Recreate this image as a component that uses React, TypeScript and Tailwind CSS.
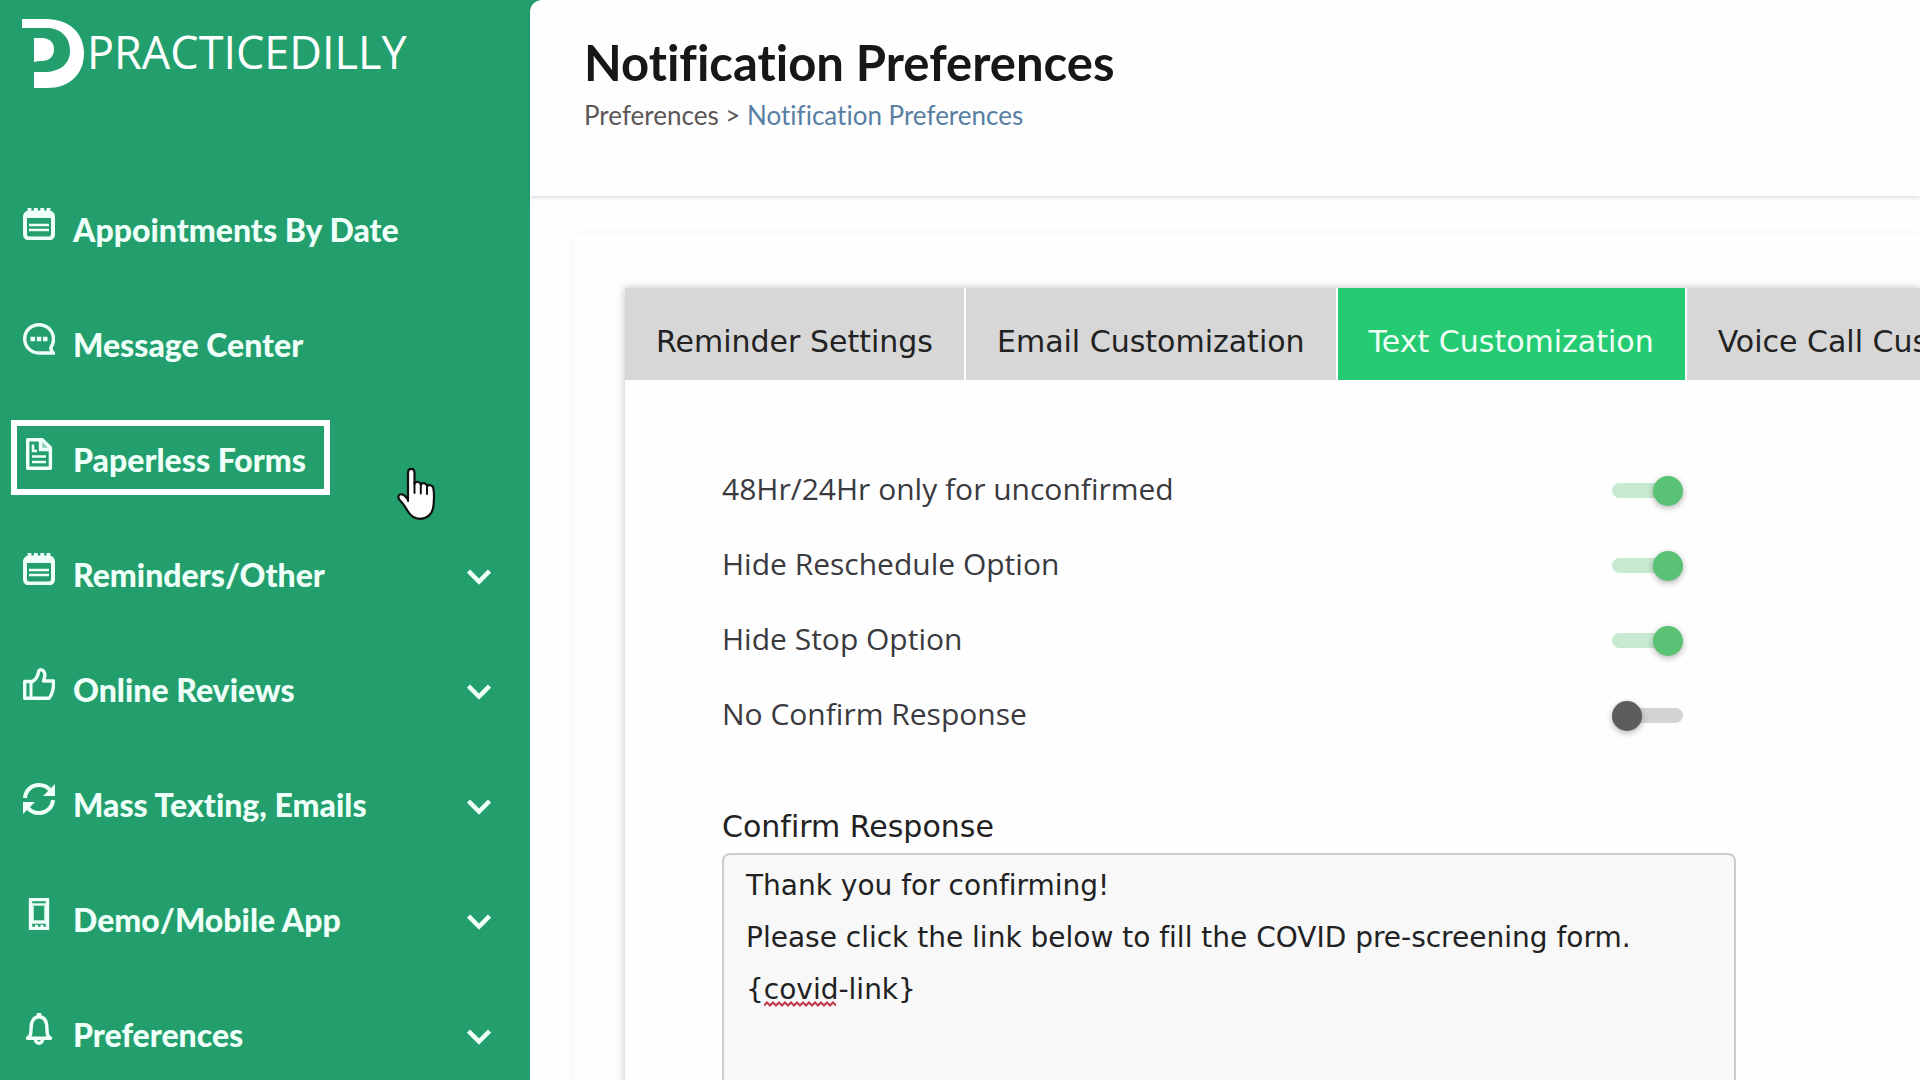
import React, { useState } from 'react';

interface NavItem {
  label: string;
  icon: React.ReactNode;
  expandable?: boolean;
  active?: boolean;
}

const Svg: React.FC<{ children: React.ReactNode }> = ({ children }) => (
  <svg
    viewBox="0 0 32 32"
    className="size-8 shrink-0 mb-2"
    fill="none"
    stroke="currentColor"
    strokeWidth={3.4}
    aria-hidden="true"
  >
    {children}
  </svg>
);

const NotepadIcon = () => (
  <Svg>
    <rect x="2" y="4.5" width="28" height="26" rx="4" strokeWidth={4} />
    <path d="M2 8h28" strokeWidth={4} />
    <path d="M6.500 0v6M12.800 0v6M19.200 0v6M25.500 0v6" strokeWidth={3.8} />
    <path d="M6 17h20M6 22h20" strokeWidth={2.4} />
  </Svg>
);

const ChatIcon = () => (
  <Svg>
    <path d="M16 1.700C8 1.700 1.700 7.800 1.700 15.800S8 30 16 30h14.500c-1.600-1.200-2.500-3-2.600-5.200 1.700-2.500 2.600-5.600 2.600-9C30.500 7.800 24 1.700 16 1.700z" />
    <path d="M7.500 16h4.500M13.800 16h4.500M20 16h4.500" strokeWidth={4.500} />
  </Svg>
);

const DocumentIcon = () => (
  <Svg>
    <path d="M4.700 1.700h14.500l8.200 8v20.600H4.700z" strokeLinejoin="round" />
    <path d="M17.500 1v10.500H28" />
    <path d="M17.500 1 28 11.500H17.500z" fill="currentColor" stroke="none" opacity={0.5} />
    <path d="M10 6.500v7M9 13h5M9 18.500h14M9 24h14" strokeWidth={2.600} />
  </Svg>
);

const ThumbIcon = () => (
  <Svg>
    <path
      d="M1.700 13.500h7.800c4-2.500 5.500-6 6-9.500.3-1.700 1.500-2.500 3-2.200 3.500.8 4.300 5.200 2 11.200h10c.3 6-1 13-4.500 17.300H1.700z"
      strokeLinejoin="round"
    />
    <path d="M8 13.500v17" strokeWidth={3} />
  </Svg>
);

const RefreshIcon = () => (
  <Svg>
    <path d="M2 15C2.500 7.500 8.500 2 16 2c5 0 9.300 2.400 11.800 6.200" strokeWidth={4} />
    <path d="M30 17c-.5 7.500-6.500 13-14 13-5 0-9.300-2.400-11.800-6.200" strokeWidth={4} />
    <path d="M32 1v12H20zM0 31V19h12z" fill="currentColor" stroke="none" />
  </Svg>
);

const PhoneIcon = () => (
  <Svg>
    <rect x="7.500" y="1.500" width="17" height="29" />
    <path d="M7 6.500h18" strokeWidth={2.400} />
    <path d="M7 24h18" strokeWidth={3.400} />
    <path d="M9.500 8v15M22.500 8v15" strokeWidth={2.400} />
    <path d="M12 28h3M17.500 28h3" strokeWidth={2.600} />
  </Svg>
);

const BellIcon = () => (
  <Svg>
    <path d="M4.500 25.200c3-2 3.500-4 3.500-9 0-7.700 2.500-12.500 8-12.500s8 4.800 8 12.500c0 5 .5 7 3.500 9z" strokeLinejoin="round" />
    <path d="M16 0v4" strokeWidth={4.500} />
    <path d="M12.500 26.500c0 5 7 5 7 0" />
  </Svg>
);

const ChevronIcon = () => (
  <svg viewBox="0 0 24 16" className="mt-2 w-6 h-4" fill="none" stroke="currentColor" strokeWidth={4.5} aria-hidden="true">
    <path d="M1.500 2 12 12.500 22.500 2" />
  </svg>
);

const HandCursor = () => (
  <svg viewBox="0 0 40 54" className="w-10 h-[54px] absolute left-[397px] top-[467px]" aria-hidden="true">
    <path
      d="M11 34V6c0-5.500 6.500-5.500 6.500 0v11c1-3 6-2.600 6.300.8 1.200-2.600 5.900-2 6.200 1.400 1.800-2 6-1.200 6.500 2.600.8 6 .5 13-.2 18-1 7.500-6.300 12-13.300 12-6 0-9.500-3-12.500-8-2.500-4.300-5-8-8-11-2.500-3-.5-6 2.500-5.500 2.500.5 4.500 3 6 5.500z"
      fill="#fff"
      stroke="#111"
      strokeWidth={2.2}
      strokeLinejoin="round"
    />
    <path d="M17.500 16v10M23.800 18v8.500M30 20v7" stroke="#111" strokeWidth={2} strokeLinecap="round" />
  </svg>
);

const Logo = () => (
  <a href="#" className="flex items-start gap-0.5 pl-[22px] pt-[18px] h-[190px] text-white">
    <svg viewBox="0 0 63 71" className="w-[63px] h-[71px]" fill="#fff" aria-hidden="true">
      <path d="M0 1h24c23 0 38 14 38 34 0 22-15 35-37 35H12V54h10c16 0 26-8 26-21 0-15-10-23-24-23H0z" />
      <path d="M12 20h8c8 0 12 5 12 11 0 8-5 12-12 12-3 0-6 .5-8 1z" />
    </svg>
    <span className="mt-1 font-['Open_Sans',sans-serif] text-[45px] leading-[60px]">PRACTICEDILLY</span>
  </a>
);

const navItems: NavItem[] = [
  { label: 'Appointments By Date', icon: <NotepadIcon /> },
  { label: 'Message Center', icon: <ChatIcon /> },
  { label: 'Paperless Forms', icon: <DocumentIcon />, active: true },
  { label: 'Reminders/Other', icon: <NotepadIcon />, expandable: true },
  { label: 'Online Reviews', icon: <ThumbIcon />, expandable: true },
  { label: 'Mass Texting, Emails', icon: <RefreshIcon />, expandable: true },
  { label: 'Demo/Mobile App', icon: <PhoneIcon />, expandable: true },
  { label: 'Preferences', icon: <BellIcon />, expandable: true },
];

const tabs = ['Reminder Settings', 'Email Customization', 'Text Customization', 'Voice Call Customization'];

const options = [
  { id: 'unconfirmed', label: '48Hr/24Hr only for unconfirmed', on: true },
  { id: 'reschedule', label: 'Hide Reschedule Option', on: true },
  { id: 'stop', label: 'Hide Stop Option', on: true },
  { id: 'no-confirm', label: 'No Confirm Response', on: false },
];

const Sidebar = () => (
  <aside className="w-[530px] shrink-0 text-[#effffa]">
    <Logo />
    <nav className="flex flex-col gap-10">
      {navItems.map((item) => (
        <a key={item.label} href="#" className="flex items-center justify-between h-[75px] pl-[11px] pr-[39px]">
          <span
            className={`flex items-center gap-[18px] h-full border-[6px] pl-[6px] pr-[18px] ${
              item.active ? 'border-white' : 'border-transparent'
            }`}
          >
            {item.icon}
            <span className="pt-1 font-['Lato',sans-serif] font-black text-[32px] leading-10 whitespace-nowrap">
              {item.label}
            </span>
          </span>
          {item.expandable && <ChevronIcon />}
        </a>
      ))}
    </nav>
  </aside>
);

const App: React.FC = () => {
  const [activeTab, setActiveTab] = useState('Text Customization');
  const [message, setMessage] = useState(
    'Thank you for confirming!\nPlease click the link below to fill the COVID pre-screening form.\n{covid-link}'
  );

  return (
    <div className="relative flex h-screen overflow-hidden bg-[#229f6c] [font-variant-ligatures:none]">
      <Sidebar />

      <main className="flex-1 min-w-0 bg-[#fefefe] rounded-tl-xl">
        <header className="h-[196px] pl-[54px] pt-8 shadow-[0_2px_4px_rgba(0,0,0,0.12)] rounded-tl-xl font-['Lato',sans-serif]">
          <h1 className="text-[49px] leading-[60px] font-bold text-[#17171a]">Notification Preferences</h1>
          <p className="mt-[7px] text-[26px] leading-8 text-[#5c5658]">
            <a href="#">Preferences</a> &gt; <a href="#" className="text-[#587fa3]">Notification Preferences</a>
          </p>
        </header>

        <div className="pl-[43px] pt-[38px]">
          <div className="pl-[52px] pt-[54px] rounded-tl-lg shadow-[0_0_8px_rgba(0,0,0,0.05)]">
            <section className="shadow-[0_0_8px_rgba(0,0,0,0.25)]">
              <div role="tablist" className="flex h-[92px] overflow-hidden bg-[#d7d7d7]">
                {tabs.map((tab) => (
                  <button
                    key={tab}
                    role="tab"
                    aria-selected={tab === activeTab}
                    onClick={() => setActiveTab(tab)}
                    className={`shrink-0 px-[31px] pt-4 border-r-2 border-white font-['DejaVu_Sans',Verdana,sans-serif] text-[30px] leading-10 ${
                      tab === activeTab ? 'bg-[#25cb72] text-[#effff6]' : 'text-[#222]'
                    }`}
                  >
                    {tab}
                  </button>
                ))}
              </div>

              <div className="pl-[97px] pt-[71px] bg-[#fefefe]">
                <div className="max-w-[961px]">
                  {options.map((o) => (
                    <div key={o.id} className="flex items-center justify-between h-[75px]">
                      <label htmlFor={o.id} className="font-['Open_Sans',sans-serif] text-[30px] leading-10 text-[#3a3a3f]">
                        {o.label}
                      </label>
                      <input
                        id={o.id}
                        type="checkbox"
                        role="switch"
                        defaultChecked={o.on}
                        className="flex items-center appearance-none mt-1 w-[71px] h-[15px] rounded-full bg-[#d4d4d4] checked:bg-[#c8ead1] before:block before:size-[30px] before:shrink-0 before:rounded-full before:bg-[#5d5b5c] before:shadow-[0_2px_6px_rgba(0,0,0,0.3)] checked:before:ml-[41px] checked:before:bg-[#5ac275]"
                      />
                    </div>
                  ))}
                </div>

                <div className="mt-[58px] font-['DejaVu_Sans',Verdana,sans-serif] text-[#222]">
                  <label htmlFor="confirm-response" className="block text-[30px] leading-9">
                    Confirm Response
                  </label>
                  <div className="relative mt-2 max-w-[1014px]">
                    <textarea
                      id="confirm-response"
                      rows={6}
                      spellCheck={false}
                      value={message}
                      onChange={(e) => setMessage(e.target.value)}
                      className="block w-full resize-none rounded-lg border-2 border-[#ccc] bg-[#f8f8f9] px-[22px] py-[5px] text-[28px] leading-[52px] outline-none"
                    />
                    {/* spelling mark under "covid" */}
                    <svg viewBox="0 0 72 6" className="absolute left-[42px] top-[148px] w-[72px] h-1.5" aria-hidden="true">
                      <path
                        d="M0 4.500l3-3 3 3 3-3 3 3 3-3 3 3 3-3 3 3 3-3 3 3 3-3 3 3 3-3 3 3 3-3 3 3 3-3 3 3 3-3 3 3 3-3 3 3 3-3 3 3"
                        fill="none"
                        stroke="#c0394a"
                        strokeWidth={2}
                      />
                    </svg>
                  </div>
                </div>
              </div>
            </section>
          </div>
        </div>
      </main>

      <HandCursor />
    </div>
  );
};

export default App;
